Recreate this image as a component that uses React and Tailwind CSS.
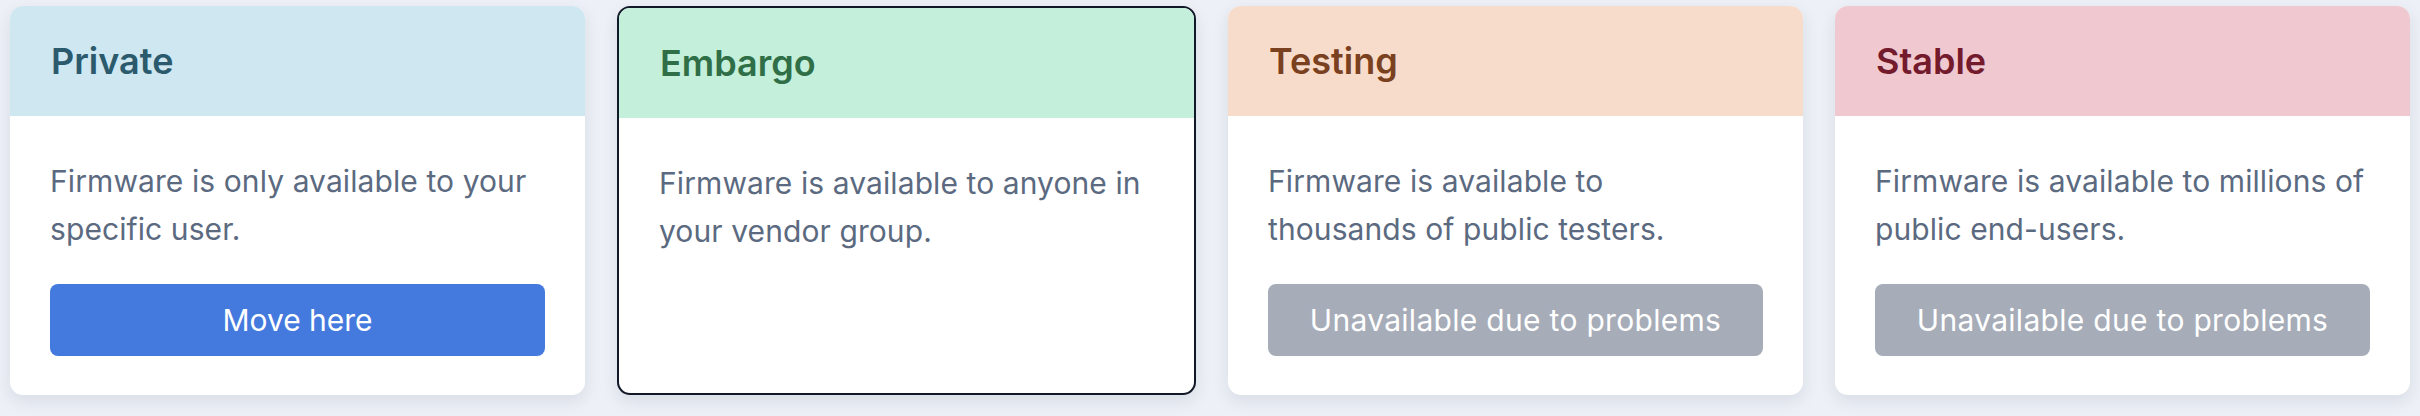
const stages = [
  {
    name: "Private",
    head: "bg-[#cfe7f1]",
    title: "text-[#2b5a6d]",
    lines: ["Firmware is only available to your specific user."],
    action: "move",
  },
  {
    name: "Embargo",
    head: "bg-[#c4efda]",
    title: "text-[#2f6e46]",
    lines: ["Firmware is available to anyone in your vendor group."],
    current: true,
  },
  {
    name: "Testing",
    head: "bg-[#f8dccb]",
    title: "text-[#7a4120]",
    lines: ["Firmware is available to", "thousands of public testers."],
    action: "blocked",
  },
  {
    name: "Stable",
    head: "bg-[#f0c8d0]",
    title: "text-[#731b2c]",
    lines: ["Firmware is available to millions of public end-users."],
    action: "blocked",
  },
];

function StageCard({ stage }) {
  return (
    <div
      className={`flex-1 flex flex-col bg-white rounded-[13px] overflow-hidden shadow-[0_6px_16px_rgba(30,45,80,0.10)] ${
        stage.current ? "border-2 border-[#111827]" : ""
      }`}
    >
      <div className={`${stage.head} px-[41px] h-[110px] shrink-0 flex items-center`}>
        <h2 className={`${stage.title} text-[36px] leading-[40px] font-semibold`}>{stage.name}</h2>
      </div>
      <div className="flex flex-col px-[40px] pt-[41px] pb-[40px]">
        <p className="text-[30px] leading-[48px] text-[#5b6a80] tracking-[0.003em]">
          {stage.lines.map((l, i) => (
            <span key={i}>
              {i > 0 && <br />}
              {l}
            </span>
          ))}
        </p>
        {stage.action === "move" && (
          <button className="mt-[31px] h-[72px] rounded-lg bg-[#4479de] text-white text-[30px]">
            Move here
          </button>
        )}
        {stage.action === "blocked" && (
          <button className="mt-[31px] h-[72px] rounded-lg bg-[#a6acb8] text-white text-[30px] tracking-[0.01em] cursor-not-allowed">
            Unavailable due to problems
          </button>
        )}
      </div>
    </div>
  );
}

export default function App() {
  return (
    <div
      className="w-[2420px] h-[416px] bg-[#edf0f6] flex items-stretch gap-[32px] px-[10px] pt-[6px] pb-[21px]"
      style={{ fontFamily: "Inter, 'Noto Sans', sans-serif" }}
    >
      {stages.map((s) => (
        <StageCard key={s.name} stage={s} />
      ))}
    </div>
  );
}
